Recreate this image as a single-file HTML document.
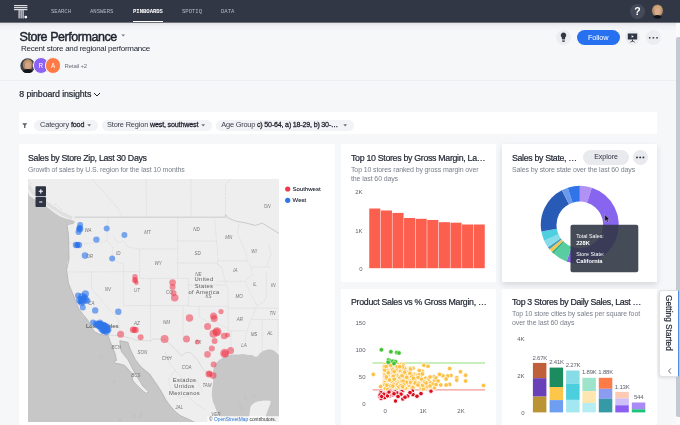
<!DOCTYPE html>
<html>
<head>
<meta charset="utf-8">
<style>
*{box-sizing:border-box;margin:0;padding:0}
html,body{width:680px;height:425px;overflow:hidden;background:#f6f7f9;font-family:"Liberation Sans",sans-serif;color:#1d232f}
body{position:relative}
.abs{position:absolute}
.nav{position:absolute;left:0;top:0;width:680px;height:22px;background:#323746}
.nav:after{content:"";position:absolute;left:0;top:22px;width:680px;height:9px;background:linear-gradient(#6d707b 0,#6d707b 11%,rgba(60,66,80,.10) 12%,rgba(60,66,80,.035) 45%,rgba(60,66,80,0) 100%)}
.nav span{position:absolute;top:8.6px;font-family:"Liberation Mono",monospace;font-size:5.6px;letter-spacing:-.03px;color:#b4b8c2;line-height:6px;white-space:nowrap}
.nav span.act{color:#fff;font-weight:bold}
.t{position:absolute;white-space:nowrap;line-height:1}
.card{position:absolute;background:#fff}
.ct{position:absolute;transform-origin:0 0;transform:translateY(.5px) rotate(.02deg);font-size:8.8px;color:#1d232f;white-space:nowrap;line-height:10px;-webkit-text-stroke:.2px #1d232f}
.cs{position:absolute;transform-origin:0 0;transform:translateY(.5px) rotate(.02deg);font-size:7px;color:#7a7f8a;line-height:10px;white-space:nowrap}
.pill{position:absolute;top:119.5px;height:11.3px;border-radius:6px;background:#f2f3f6}
.pt{position:absolute;top:121px;font-size:7.4px;line-height:8px;color:#3b404c;white-space:nowrap}
.pt b{color:#1d232f;font-weight:normal;font-size:7.15px;-webkit-text-stroke:.27px #1d232f}
.ax{font-family:"Liberation Sans",sans-serif;font-size:6px;fill:#5a5f6a}
</style>
</head>
<body>
<div id="w" style="position:absolute;left:0;top:0;width:680px;height:425px;overflow:hidden;will-change:transform">
<!-- NAV -->
<div class="nav">
  <svg class="abs" style="left:13px;top:4px" width="16" height="16" viewBox="0 0 16 16">
    <g fill="#dcdde1"><rect x="1" y="1" width="13.4" height="1.2"/><rect x="1" y="3" width="13.4" height="1.2"/><rect x="1" y="5" width="13.4" height="1.2"/>
    <rect x="5.5" y="5" width="1.2" height="9.4"/><rect x="7.5" y="5" width="1.2" height="9.4"/><rect x="9.5" y="5" width="1.2" height="9.4"/></g>
    <circle cx="12.8" cy="13.1" r="1.4" fill="#fff"/>
  </svg>
  <span style="left:51px">SEARCH</span>
  <span style="left:90px">ANSWERS</span>
  <span class="act" style="left:133px">PINBOARDS</span>
  <span style="left:182px">SPOTIQ</span>
  <span style="left:221px">DATA</span>
  <div class="abs" style="left:133px;top:21px;width:30px;height:2px;background:#fff"></div>
  <div class="abs" style="left:630px;top:4px;width:15px;height:15px;border-radius:50%;background:#454a58;color:#fff;font-size:10.5px;font-weight:bold;text-align:center;line-height:15.5px">?</div>
  <svg class="abs" style="left:651px;top:4px" width="13" height="15" viewBox="0 0 13 15">
    <defs><clipPath id="av2"><ellipse cx="6.5" cy="7.5" rx="6.3" ry="7.3"/></clipPath></defs>
    <g clip-path="url(#av2)"><rect width="13" height="15" fill="#3a3e4b"/>
    <ellipse cx="6.5" cy="6.6" rx="5.4" ry="6" fill="#b8906a"/>
    <ellipse cx="6.6" cy="7.2" rx="3.1" ry="3.9" fill="#d9aa8c"/>
    <path d="M2 5.6Q3.6 1.6 6.8 1.8Q10 2 11 5.8Q8.8 3.8 6.6 4.2Q4.2 4.2 2 5.6Z" fill="#cfa877"/>
    <ellipse cx="6.5" cy="15" rx="5" ry="4" fill="#121317"/></g>
  </svg>
</div>

<!-- HEADER -->
<div class="t" id="h1" style="left:19.5px;top:30.6px;font-size:12.5px;color:#1d232f;-webkit-text-stroke:.45px #1d232f;letter-spacing:-0.451px">Store Performance</div>
<svg class="abs" style="left:121px;top:34.4px" width="5" height="4"><path d="M0.4 0.4h3.6l-1.8 2.1z" fill="#6b707b"/></svg>
<div class="t" id="h2" style="left:21px;top:44.6px;font-size:8px;color:#1d232f;letter-spacing:-0.264px">Recent store and regional performance</div>

<svg class="abs" style="left:20.4px;top:57.8px" width="15.4" height="15.4" viewBox="0 0 15 15">
  <defs><clipPath id="av1"><circle cx="7.5" cy="7.5" r="7.2"/></clipPath></defs>
  <g clip-path="url(#av1)"><rect width="15" height="15" fill="#3d4149"/>
  <ellipse cx="7.6" cy="6.6" rx="4.9" ry="5.6" fill="#a98560"/>
  <ellipse cx="7.7" cy="7.2" rx="2.9" ry="3.7" fill="#d3a486"/>
  <path d="M3.6 5.4Q5 2 8 2.2Q11 2.4 11.6 5.6Q9.6 3.8 7.6 4.2Q5.4 4.2 3.6 5.4Z" fill="#c09a6e"/>
  <ellipse cx="7.6" cy="15.2" rx="6" ry="4.4" fill="#141519"/></g>
</svg>
<div class="abs" style="left:32.6px;top:57.2px;width:16.6px;height:16.6px;border-radius:50%;background:#8c62f5;border:.8px solid #f6f7f9;color:#fff;font-size:6.3px;text-align:center;line-height:15px">R</div>
<div class="abs" style="left:44.9px;top:57.2px;width:16.6px;height:16.6px;border-radius:50%;background:#ff7a45;border:.8px solid #f6f7f9;color:#fff;font-size:6.3px;text-align:center;line-height:15px">A</div>
<div class="t" id="h3" style="left:64.5px;top:62.6px;font-size:6px;color:#6b707b;letter-spacing:-0.151px">Retail +2</div>

<div class="abs" style="left:.4px;top:.5px;width:0;height:0">
<!-- header actions -->
<div class="abs" style="left:556px;top:29px;width:15px;height:15px;border-radius:50%;background:#ebedf0"></div>
<svg class="abs" style="left:559px;top:31px" width="9" height="11" viewBox="0 0 9 11"><path d="M4.5 0.6a2.7 2.7 0 0 0-1.6 4.9v1.6h3.2V5.5A2.7 2.7 0 0 0 4.5 0.6z" fill="#323746"/><rect x="3" y="7.6" width="3" height="0.9" fill="#323746"/><rect x="3.4" y="9" width="2.2" height="0.9" fill="#323746"/></svg>
<div class="abs" style="left:576.2px;top:29.2px;width:43.2px;height:15.3px;border-radius:8px;background:#2770ef;color:#fff;font-size:7.3px;text-align:center;line-height:15.3px;letter-spacing:-.1px">Follow</div>
<div class="abs" style="left:625px;top:29px;width:15px;height:15px;border-radius:50%;background:#ebedf0"></div>
<svg class="abs" style="left:627px;top:32px" width="11" height="10" viewBox="0 0 11 10"><rect x="0.8" y="0.5" width="9.4" height="6" fill="#323746"/><path d="M4.6 2.2v2.6l2.2-1.3z" fill="#fff"/><rect x="5" y="6.5" width="1" height="2" fill="#323746"/><path d="M3.3 9.2l2.2-1.4 2.2 1.4" stroke="#323746" stroke-width=".8" fill="none"/></svg>
<div class="abs" style="left:646px;top:29.4px;width:14.8px;height:14.8px;border-radius:50%;background:#ebedf0"></div>
<svg class="abs" style="left:648px;top:35px" width="11" height="4"><rect x="0.95" y="1.05" width="1.5" height="1.5" fill="#323746"/><rect x="4.65" y="1.05" width="1.5" height="1.5" fill="#323746"/><rect x="8.25" y="1.05" width="1.5" height="1.5" fill="#323746"/></svg>

</div>
<div class="abs" style="left:0;top:80px;width:676px;height:1px;background:#eceef1"></div>

<div class="t" id="h4" style="left:19.25px;top:89.6px;font-size:8.8px;color:#1d232f;-webkit-text-stroke:.22px #1d232f;letter-spacing:-0.098px">8 pinboard insights</div>
<svg class="abs" style="left:93px;top:92px" width="8" height="5"><path d="M1 1l3 3 3-3" stroke="#1d232f" stroke-width="1" fill="none"/></svg>

<!-- FILTER BAR -->
<div class="card" style="left:19px;top:112.4px;width:638px;height:22px"></div>
<svg class="abs" style="left:21.9px;top:122.6px" width="5.5" height="5.5" viewBox="0 0 6 6"><path d="M0.2 0.3h5.6L3.7 2.8v2.8H2.3V2.8z" fill="#5a5f6a"/></svg>
<div class="pill" style="left:34px;width:63.5px"></div>
<div class="pt" id="p1" style="left:40px;letter-spacing:-0.131px">Category <b>food</b></div>
<svg class="abs" style="left:87.3px;top:124px" width="5" height="3"><path d="M0.3 0.3h3.8L2.2 2.4z" fill="#6b707b"/></svg>
<div class="pill" style="left:101.5px;width:110px"></div>
<div class="pt" id="p2" style="left:107px;letter-spacing:-0.17px">Store Region <b>west, southwest</b></div>
<svg class="abs" style="left:201px;top:124px" width="5" height="3"><path d="M0.3 0.3h3.8L2.2 2.4z" fill="#6b707b"/></svg>
<div class="pill" style="left:215.5px;width:138px"></div>
<div class="pt" id="p3" style="left:221.25px;letter-spacing:-0.205px">Age Group <b>c) 50-64, a) 18-29, b) 30-…</b></div>
<svg class="abs" style="left:343.3px;top:124px" width="5" height="3"><path d="M0.3 0.3h3.8L2.2 2.4z" fill="#6b707b"/></svg>

<!-- CARDS -->
<div class="card" id="c1" style="left:19px;top:144px;width:315.5px;height:290px"></div>
<div class="card" id="c2" style="left:341px;top:144px;width:154.5px;height:138px"></div>
<div class="card" id="c3" style="left:502px;top:144px;width:155px;height:138px;box-shadow:0 3px 6px rgba(40,50,70,.15)"></div>
<div class="card" id="c4" style="left:341px;top:289px;width:154.5px;height:140px"></div>
<div class="card" id="c5" style="left:502px;top:289px;width:155px;height:140px"></div>

<!-- MAP CARD -->
<div class="ct" id="t1" style="left:28px;top:152px;letter-spacing:-0.293px">Sales by Store Zip, Last 30 Days</div>
<div class="cs" id="s1" style="left:28px;top:164px;letter-spacing:-0.141px">Growth of sales by U.S. region for the last 10 months</div>
<svg class="abs" style="left:0;top:0" width="680" height="425" viewBox="0 0 680 425">
  <defs><clipPath id="mc"><rect x="28" y="179" width="251" height="243"/></clipPath></defs>
  <g clip-path="url(#mc)">
    <rect x="28" y="179" width="251" height="243" fill="#eeeeee"/>
    <!-- Pacific -->
    <path fill="#c7c7c7" d="M28 193 L29.5 196 L38 201.5 L47 207 L54 212.5 L60 216.5 L67 219 L72 220 L74.5 221.5 L73 223.5 L69.5 223.5 L67 224.5 L67.8 230 L68.5 235.5 L68.8 247 L69 259 L67.5 262 L66.6 270 L67.5 277 L68.5 283.5 L71 290 L74 296.7 L76 303 L78.8 309 L83 315 L88.3 321 L91 327 L94 331.5 L100 334.5 L107.4 335.5 L108.2 335.4 L109.5 340 L111.5 344.8 L113.3 349 L114.8 353 L115.8 357 L116.5 360.5 L114.2 361.3 L115.5 363.6 L119.5 363.8 L124.7 365.4 L128.5 369.5 L132.1 373.7 L132.3 377.5 L133 381 L136.5 385 L140.4 388.5 L143.5 391.5 L146.1 393.4 L148.6 391.8 L145.8 389 L142.8 386 L140.6 382.5 L138.7 379.4 L135.2 373.5 L132.1 367.9 L130 363.5 L128 359.7 L124.5 355.5 L121.4 351.4 L120.3 346 L119.8 340.7 L124 341.5 L128 342.4 L129 346 L130.5 349.8 L133 355 L135.4 359.7 L138.3 363.5 L141.2 367.1 L145.3 370.5 L149.4 373.7 L152 377.5 L154.4 381.1 L157.8 386 L161 391 L163.5 395.5 L165.9 400 L168.6 403.8 L172 408 L175.6 412 L181 416 L188 419 L196 423 L28 423 Z"/>
    <path fill="none" stroke="#e0e0e0" stroke-width="3" d="M28 186 L33 193 L42 200 L52 207 L62 214 L72 218"/>
    <path fill="none" stroke="#d6d6d6" stroke-width=".8" stroke-dasharray="2 1.5" d="M29 184 L36 193 L46 201 L57 209 L68 215.5 M28 180 L31 184 M40 194 L48 200 M55 204 L62 210"/>
    
    <!-- Gulf -->
    <path fill="#c7c7c7" d="M280 356 L274 350.4 L270 349.2 L267 349.7 L263 351 L260 353.2 L257.5 356.5 L255.3 356.8 L252 355 L248.2 355 L243 354 L238.8 354.4 L230.6 354.4 L226 355.8 L222.4 358 L218.5 360.5 L215.3 363.8 L213.6 368 L213 372 L213.4 378 L213 383.8 L212 390 L211.8 395.6 L213 402 L215.3 407.4 L217 412 L218.8 415.6 L221 419 L224 423 L280 423 Z"/>
    <path fill="#eeeeee" d="M246 423 L248.5 419 L249.4 415.6 L250 410 L250.6 406.2 L254 403 L257.6 401.5 L264 400.6 L270.6 400.8 L270.5 403.5 L269.4 406.2 L267.5 411 L265.9 415.6 L264 423 Z"/>
    <!-- small islands outlines -->
    <g fill="none" stroke="#bdbdbd" stroke-width=".5">
      <ellipse cx="101" cy="357" rx="1.6" ry="2.2"/><circle cx="114.5" cy="381.5" r="1.1"/><circle cx="120" cy="420" r="1.4"/><circle cx="134.5" cy="416" r="1.1"/><circle cx="140.5" cy="416.5" r="1.3"/><circle cx="141.5" cy="413.5" r="1"/>
      <circle cx="245.3" cy="398" r="1.3"/><ellipse cx="254.3" cy="395.5" rx="1.4" ry="1.8"/><circle cx="240.5" cy="405" r="1.2"/><circle cx="242.5" cy="409" r="1.1"/>
    </g>
    <!-- coast outline -->
    <path fill="none" stroke="#b4b4b4" stroke-width=".9" stroke-linejoin="round" d="M74.5 221.5 L73 223.5 L67 224.5 L68.5 235.5 L69 259 L66.6 270 L68.5 283.5 L74 296.7 L78.8 309 L88.3 321 L94 331.5 L100 334.5 L107.4 335.5 L108.2 335.4 L109.5 340 L111.5 344.8 L113.3 349 L114.8 353 L115.8 357 L116.5 360.5 L114.2 361.3 L115.5 363.6 L119.5 363.8 L124.7 365.4 L128.5 369.5 L132.1 373.7 L132.3 377.5 L133 381 L136.5 385 L140.4 388.5 L143.5 391.5 L146.1 393.4 L148.6 391.8 L145.8 389 L142.8 386 L140.6 382.5 L138.7 379.4 L135.2 373.5 L132.1 367.9 L130 363.5 L128 359.7 L124.5 355.5 L121.4 351.4 L120.3 346 L119.8 340.7 L124 341.5 L128 342.4 L129 346 L130.5 349.8 L133 355 L135.4 359.7 L138.3 363.5 L141.2 367.1 L145.3 370.5 L149.4 373.7 L152 377.5 L154.4 381.1 L157.8 386 L161 391 L163.5 395.5 L165.9 400 L168.6 403.8 L172 408 L175.6 412 L181 416 L188 419 L196 423"/>
    <!-- borders -->
    <path fill="none" stroke="#c6c6c6" stroke-width=".9" d="M74.5 217.2 L225.4 217.2 L225.6 214.6 L228 218 L236.5 221.4 L246 223 L255.3 225.4 L262.4 223.2 L280 234"/>
    <path fill="none" stroke="#cfcfcf" stroke-width=".6" d="M107.4 335 L121.5 335.8 L136.8 340.3 L151 341 L153.3 338.8 L165 339.6 L172 346.2 L181.5 355.6 L186 352.5 L190.6 352.8 L197.6 360.3 L203.5 369.7 L209.4 374.9 L213 376"/>
    <path fill="none" stroke="#d2d2d2" stroke-width=".5" stroke-dasharray="2.5 .8" d="M190.8 179 L191.2 217.2 M231 179 L225.5 184 L225.5 214.6 M146 179 L146.5 217.2 M92 179 L100 188 L110 199 L118 209 L121 214 L122 217.2"/>
    <g fill="none" stroke="#d3d3d3" stroke-width=".55" stroke-dasharray="1.6 .9">
      <path d="M69 243 L80 244 L96 243 L107 241 L108 217.2"/>
      <path d="M67 272 L139.6 271.6 L139.6 278.4 L188.4 278.4"/>
      <path d="M108 241 L113 248 L112 256 L117 262 L123.6 264 L123.6 305.5"/>
      <path d="M91.5 272 L91.5 289 L118 319 L120.5 334"/>
      <path d="M123.6 305.5 L188.4 305.5"/>
      <path d="M150.5 278.4 L150.5 341"/>
      <path d="M139.6 271.6 L139.6 249 L177.6 249 L177.6 278.4"/>
      <path d="M113 236 L118 243 L124 241 L128 247 L139.6 249"/>
      <path d="M177.6 249 L177.6 217.2"/>
      <path d="M177.6 241.1 L216.5 241.1 M177.6 263 L216 263 L222 268"/>
      <path d="M214.6 217.2 L216 235 L218 259 L217 263 L222 268 L224.5 279 L228.2 290.3 L228.2 330.8 L231 330.8 L231 350.6"/>
      <path d="M188.4 278.4 L188.4 306.3 L228.2 306.3 M188.4 285 L224.8 285"/>
      <path d="M183 306.3 L183 339.5 M199.4 306.3 L199.4 317 L206 321 L214 322 L222 326 L228.2 329"/>
      <path d="M217.5 260.8 L247 260.8 M217.5 281.3 L245 281.3"/>
      <path d="M238.8 223.8 L237.5 232.5 L241.3 242.5 L246.3 253.8 L247 260.8 L251.3 267.5 L252.5 275 L245 281.3 L250 292.5 L256.3 303.8 L256.5 305.4 L254.6 312 L249.9 322.3 L246.1 333.6 L245.2 342"/>
      <path d="M251.3 267 L270 267 M266.3 272.5 L266.3 298 L262.5 303 L256.5 305.4"/>
      <path d="M268.8 245 L271.3 253.8 L266.3 266.3"/>
      <path d="M228.2 308.2 L280 308.2 M251.8 319.5 L280 319.5 M231 330.8 L246 330.8"/>
      <path d="M262.1 319.5 L262.1 353.4 M278 319.5 L278 345"/>
      <path d="M175 370 L182 378 L196 380 L203 392 M165 352 L170 364 L175 370 L168 380 L172 392 L180 398 L188 396 L196 404 L206 410"/>
    </g>
    <!-- labels -->
    <g font-family="Liberation Sans, sans-serif" font-size="4.5" font-style="italic" fill="#777" text-anchor="middle">
      <text x="88" y="231.5">WA</text><text x="89.5" y="257.5">OR</text><text x="118.2" y="254.5">ID</text><text x="147.5" y="234">MT</text>
      <text x="158.2" y="265">WY</text><text x="196.5" y="231">ND</text><text x="197.6" y="254.5">SD</text><text x="228.7" y="239.3">MN</text>
      <text x="254" y="253">WI</text><text x="235.3" y="271.8">IA</text><text x="198.4" y="275.8">NE</text><text x="267" y="207.7">ON</text>
      <text x="108" y="290.5">NV</text><text x="91.5" y="305">CA</text><text x="137" y="291.5">UT</text><text x="169.3" y="294">CO</text>
      <text x="208.4" y="297.5">KS</text><text x="137" y="325">AZ</text><text x="166.5" y="324">NM</text><text x="198.5" y="343.5">TX</text>
      <text x="254" y="335.5">MS</text><text x="270" y="335">AL</text><text x="244" y="347">LA</text><text x="240" y="321.3">AR</text>
      <text x="272.4" y="314.8">TN</text><text x="239.2" y="297.8">MO</text><text x="255" y="286">IL</text><text x="273.2" y="287.3">IN</text>
      <text x="186.6" y="369.3">COA</text><text x="207" y="387">TAM</text><text x="215.8" y="415.5">VER</text><text x="179.2" y="409">JAL</text>
      <text x="116.3" y="348.9">BCN</text><text x="135.9" y="377.4">BCS</text><text x="142.5" y="354.3">SON</text><text x="166.7" y="359.9">CHH</text>
    </g>
    <g font-family="Liberation Sans, sans-serif" font-size="5.8" fill="#5a5a5a" text-anchor="middle" letter-spacing=".38">
      <text x="204" y="281.2">United</text><text x="204" y="287.8">States</text><text x="204" y="294.2">of America</text>
      <text x="184.5" y="382">Estados</text><text x="184.5" y="388.4">Unidos</text><text x="184.5" y="394.9">Mexicanos</text>
    </g>
    <text x="86" y="328" font-family="Liberation Sans, sans-serif" font-size="6.2" fill="#444" letter-spacing="-.1">Los Angeles</text>
    <!-- BLUE points -->
    <g fill="#2f76ea" fill-opacity=".62">
      <circle cx="80.2" cy="225.1" r="3"/><circle cx="79.8" cy="229" r="3.6"/><circle cx="79.6" cy="228" r="3"/><circle cx="78.5" cy="232" r="3"/>
      <circle cx="106.7" cy="228.5" r="3"/><circle cx="124.4" cy="235" r="3"/><circle cx="96.4" cy="239.6" r="3.2"/>
      <circle cx="76" cy="245" r="3.2"/><circle cx="78.8" cy="245" r="3.3"/><circle cx="77.5" cy="245" r="3"/>
      <circle cx="85" cy="255.6" r="3.3"/><circle cx="112.2" cy="258.5" r="3"/>
      <circle cx="85.4" cy="293.8" r="3.6"/><circle cx="82" cy="297" r="4"/><circle cx="80" cy="300" r="4"/><circle cx="83" cy="300.5" r="4.2"/><circle cx="85.5" cy="299.5" r="3.6"/><circle cx="81.5" cy="302.5" r="3.5"/><circle cx="78" cy="295.5" r="3"/><circle cx="87.5" cy="301" r="3"/>
      <circle cx="82.8" cy="307.6" r="3"/><circle cx="95.2" cy="310.4" r="3.2"/><circle cx="118.3" cy="311.7" r="3.2"/>
      <circle cx="93" cy="322.5" r="3"/><circle cx="96.5" cy="324" r="3.6"/><circle cx="99" cy="325" r="4"/><circle cx="101.5" cy="325.5" r="4.2"/><circle cx="104" cy="326.5" r="4.2"/><circle cx="102" cy="328.5" r="4"/><circle cx="105.5" cy="329.5" r="4"/><circle cx="107" cy="327" r="3.5"/><circle cx="103.5" cy="330.5" r="3.6"/><circle cx="106.5" cy="332" r="3.2"/><circle cx="100" cy="322.5" r="3"/><circle cx="108.5" cy="330" r="3"/>
    </g>
    <g fill="#2f76ea" fill-opacity=".85">
      <circle cx="82" cy="299.5" r="3.6"/><circle cx="84.5" cy="297" r="3"/><circle cx="80.5" cy="301.5" r="2.6"/><circle cx="79.5" cy="228.6" r="2.6"/><circle cx="77.4" cy="245" r="2.6"/>
      <circle cx="100" cy="325.3" r="4.3"/><circle cx="103.6" cy="327.2" r="5"/><circle cx="106.6" cy="329.6" r="3.8"/><circle cx="97" cy="324.3" r="2.8"/><circle cx="104" cy="331" r="3"/>
    </g>
    <!-- RED points -->
    <g fill="#ee3a4e" fill-opacity=".55">
      <circle cx="135" cy="276.8" r="2.7"/><circle cx="135" cy="280.3" r="3"/><circle cx="135.3" cy="280" r="2.4"/><circle cx="136.4" cy="282.8" r="2.3"/>
      <circle cx="172.6" cy="282.6" r="3.3"/><circle cx="172.6" cy="287" r="3"/><circle cx="173.5" cy="293" r="3"/><circle cx="174.7" cy="297.7" r="3.8"/>
      <circle cx="133" cy="329.7" r="3.2"/><circle cx="135.6" cy="330" r="3.2"/><circle cx="134.3" cy="329.8" r="3"/><circle cx="120.6" cy="334.2" r="3.5"/><circle cx="140.6" cy="337.2" r="3"/>
      <circle cx="164.6" cy="339.1" r="4"/><circle cx="186.5" cy="339.1" r="3.5"/><circle cx="189.5" cy="318" r="3.7"/><circle cx="207.6" cy="326.4" r="3.5"/><circle cx="197.3" cy="342" r="2.5"/>
      <circle cx="213.5" cy="316" r="3.5"/><circle cx="214.2" cy="318.4" r="3.5"/><circle cx="221" cy="311.6" r="2.6"/>
      <circle cx="217" cy="331.8" r="4.5"/><circle cx="216.5" cy="332" r="3.6"/><circle cx="213.5" cy="333.7" r="4"/><circle cx="224.2" cy="336" r="3.3"/><circle cx="227.5" cy="335.1" r="2.5"/>
      <circle cx="214.6" cy="341" r="3"/><circle cx="211.8" cy="348.5" r="3"/><circle cx="207.5" cy="354.4" r="3.3"/>
      <circle cx="224.7" cy="353.2" r="4.5"/><circle cx="225" cy="353.6" r="3.3"/><circle cx="230.6" cy="350.4" r="3.5"/>
      <circle cx="213.6" cy="364.5" r="3"/><circle cx="209" cy="374" r="3.5"/><circle cx="209.5" cy="373.7" r="2.8"/><circle cx="213.2" cy="375.6" r="3.3"/>
    </g>
    <!-- attribution -->
    <rect x="207.5" y="416.2" width="72" height="6" fill="#fff" fill-opacity=".8"/>
    <text x="209" y="421" font-family="Liberation Sans, sans-serif" font-size="4.85" fill="#333">© <tspan fill="#2a78d8">OpenStreetMap</tspan> contributors.</text>
    <!-- zoom -->
    <rect x="35.5" y="186.3" width="10.5" height="10" rx=".8" fill="#2f3445"/><rect x="35.5" y="197" width="10.5" height="10" rx=".8" fill="#2f3445"/>
    <path d="M38.7 191.3h4.2M40.8 189.2v4.2M39.2 202h3.2" stroke="#fff" stroke-width="1.1"/>
  </g>
  <!-- legend -->
  <circle cx="287.7" cy="189" r="2.6" fill="#ee3a4e"/><circle cx="287.7" cy="200.3" r="2.6" fill="#2f76ea"/>
  <text x="292.6" y="191.1" font-family="Liberation Sans, sans-serif" font-size="6" fill="#1d232f" stroke="#1d232f" stroke-width=".12">Southwest</text>
  <text x="292.6" y="202.4" font-family="Liberation Sans, sans-serif" font-size="6" fill="#1d232f" stroke="#1d232f" stroke-width=".12">West</text>
</svg>

<!-- BAR CARD -->
<div class="ct" id="t2" style="left:350.5px;top:152px;letter-spacing:-0.308px">Top 10 Stores by Gross Margin, La…</div>
<div class="cs" id="s2a" style="left:350.5px;top:164px;letter-spacing:-0.127px">Top 10 stores ranked by gross margin over</div>
<div class="cs" id="s2b" style="left:350.5px;top:173.2px;letter-spacing:-0.127px">the last 60 days</div>
<svg class="abs" style="left:0;top:0" width="680" height="425" viewBox="0 0 680 425">
<rect x="369.25" y="208.5" width="11.10" height="59.70" fill="#fd5f4f"/>
<rect x="380.85" y="210.5" width="11.10" height="57.70" fill="#fd5f4f"/>
<rect x="392.45" y="212.9" width="11.10" height="55.30" fill="#fd5f4f"/>
<rect x="404.05" y="218" width="11.10" height="50.20" fill="#fd5f4f"/>
<rect x="415.65" y="218.8" width="11.10" height="49.40" fill="#fd5f4f"/>
<rect x="427.25" y="220" width="11.10" height="48.20" fill="#fd5f4f"/>
<rect x="438.85" y="222.2" width="11.10" height="46.00" fill="#fd5f4f"/>
<rect x="450.45" y="222.7" width="11.10" height="45.50" fill="#fd5f4f"/>
<rect x="462.05" y="224.5" width="11.10" height="43.70" fill="#fd5f4f"/>
<rect x="473.65" y="224.5" width="11.10" height="43.70" fill="#fd5f4f"/>
<g class="ax" text-anchor="end"><text x="362.5" y="193.8">2K</text><text x="362.5" y="232.6">1K</text><text x="362.5" y="270.9">0</text></g>
</svg>
<!-- DONUT CARD -->
<div class="ct" id="t3" style="left:511.75px;top:152px;letter-spacing:-0.334px">Sales by State, …</div>
<div class="cs" id="s3" style="left:511.75px;top:164px;letter-spacing:-0.119px">Sales by store state over the last 60 days</div>
<div class="abs" style="left:583px;top:150px;width:46px;height:14.5px;border-radius:8px;background:#e8eaee;color:#2b3040;font-size:7px;text-align:center;line-height:14.5px" id="explore">Explore</div>
<div class="abs" style="left:632.7px;top:150px;width:15px;height:15px;border-radius:50%;background:#e8eaee"></div>
<svg class="abs" style="left:0;top:0" width="680" height="425" viewBox="0 0 680 425">
<g fill="#2b3040"><circle cx="637" cy="157.4" r=".95"/><circle cx="640.2" cy="157.4" r=".95"/><circle cx="643.4" cy="157.4" r=".95"/></g>
<path d="M579.80 185.80A39.0 39.0 0 0 1 591.85 187.71L587.00 202.64A23.3 23.3 0 0 0 579.80 201.50Z" fill="#b291f6"/>
<path d="M591.85 187.71A39.0 39.0 0 1 1 566.46 261.45L571.83 246.69A23.3 23.3 0 1 0 587.00 202.64Z" fill="#8765ef"/>
<path d="M566.46 261.45A39.0 39.0 0 0 1 553.45 253.55L564.06 241.98A23.3 23.3 0 0 0 571.83 246.69Z" fill="#58cda0"/>
<path d="M553.45 253.55A39.0 39.0 0 0 1 551.75 251.89L563.04 240.99A23.3 23.3 0 0 0 564.06 241.98Z" fill="#2fae82"/>
<path d="M551.75 251.89A39.0 39.0 0 0 1 549.49 249.34L561.69 239.46A23.3 23.3 0 0 0 563.04 240.99Z" fill="#f6c851"/>
<path d="M549.49 249.34A39.0 39.0 0 0 1 547.85 247.17L560.71 238.16A23.3 23.3 0 0 0 561.69 239.46Z" fill="#4a9db9"/>
<path d="M547.85 247.17A39.0 39.0 0 0 1 544.17 240.66L558.51 234.28A23.3 23.3 0 0 0 560.71 238.16Z" fill="#86dce8"/>
<path d="M544.17 240.66A39.0 39.0 0 0 1 541.39 231.57L556.85 228.85A23.3 23.3 0 0 0 558.51 234.28Z" fill="#4fd0e0"/>
<path d="M541.39 231.57A39.0 39.0 0 0 1 561.79 190.21L569.04 204.13A23.3 23.3 0 0 0 556.85 228.85Z" fill="#275bb5"/>
<path d="M561.79 190.21A39.0 39.0 0 0 1 567.75 187.71L572.60 202.64A23.3 23.3 0 0 0 569.04 204.13Z" fill="#6c9aeb"/>
<path d="M567.75 187.71A39.0 39.0 0 0 1 579.80 185.80L579.80 201.50A23.3 23.3 0 0 0 572.60 202.64Z" fill="#2f74e9"/>
<path d="M604.8 214.6 L604.8 221.6 L606.4 220.1 L607.5 222.5 L608.6 222 L607.5 219.7 L609.6 219.6 Z" fill="#111" stroke="#fff" stroke-width=".3"/>
<rect x="570.5" y="224.7" width="67.8" height="47.6" rx="2" fill="#323746" fill-opacity=".9"/>
<g font-family="Liberation Sans, sans-serif" font-size="5.35" fill="#fff"><text x="576.2" y="237.7">Total Sales:</text><text x="576.2" y="245.4" font-weight="bold" font-size="5.7">228K</text><text x="576.2" y="255.6">Store State:</text><text x="576.2" y="263" font-weight="bold" font-size="5.7">California</text></g>
</svg>
<!-- SCATTER CARD -->
<div class="ct" id="t4" style="left:350.5px;top:295.8px;letter-spacing:-0.285px">Product Sales vs % Gross Margin, …</div>
<svg class="abs" style="left:0;top:0" width="680" height="425" viewBox="0 0 680 425">
<g class="ax" text-anchor="end"><text x="365.5" y="325.2">150</text><text x="365.5" y="352.2">100</text><text x="365.5" y="379.1">50</text><text x="365.5" y="405.9">0</text></g>
<g class="ax" text-anchor="middle"><text x="385.2" y="412.9">0</text><text x="423.1" y="412.9">1K</text><text x="461" y="412.9">2K</text></g>
<path d="M372.5 363H485" stroke="#8fe07b" stroke-width="1.1"/>
<path d="M372.5 389.9H485" stroke="#f19a9a" stroke-width="1.1"/>
<g fill="#fcc147" stroke="#fff" stroke-width=".7">
<circle cx="397.3" cy="374.6" r="2.3"/>
<circle cx="395.2" cy="364.9" r="2.3"/>
<circle cx="391.8" cy="374.9" r="2.3"/>
<circle cx="387.3" cy="383.5" r="2.3"/>
<circle cx="410.5" cy="381.1" r="2.3"/>
<circle cx="393.9" cy="370.3" r="2.3"/>
<circle cx="404.5" cy="387.7" r="2.3"/>
<circle cx="395.8" cy="368.3" r="2.3"/>
<circle cx="395.6" cy="379.4" r="2.3"/>
<circle cx="425.7" cy="378.2" r="2.3"/>
<circle cx="390.0" cy="388.4" r="2.3"/>
<circle cx="385.8" cy="388.5" r="2.3"/>
<circle cx="409.6" cy="384.7" r="2.3"/>
<circle cx="413.7" cy="385.6" r="2.3"/>
<circle cx="389.6" cy="386.9" r="2.3"/>
<circle cx="388.9" cy="367.2" r="2.3"/>
<circle cx="394.1" cy="389.2" r="2.3"/>
<circle cx="404.5" cy="386.2" r="2.3"/>
<circle cx="413.1" cy="387.6" r="2.3"/>
<circle cx="401.5" cy="367.8" r="2.3"/>
<circle cx="400.4" cy="371.9" r="2.3"/>
<circle cx="407.3" cy="371.2" r="2.3"/>
<circle cx="396.0" cy="387.4" r="2.3"/>
<circle cx="420.3" cy="381.2" r="2.3"/>
<circle cx="386.0" cy="373.2" r="2.3"/>
<circle cx="404.5" cy="381.2" r="2.3"/>
<circle cx="400.3" cy="381.6" r="2.3"/>
<circle cx="384.6" cy="374.5" r="2.3"/>
<circle cx="388.7" cy="384.5" r="2.3"/>
<circle cx="408.0" cy="370.2" r="2.3"/>
<circle cx="389.3" cy="364.5" r="2.3"/>
<circle cx="408.1" cy="386.7" r="2.3"/>
<circle cx="400.8" cy="384.9" r="2.3"/>
<circle cx="396.5" cy="388.2" r="2.3"/>
<circle cx="410.5" cy="387.7" r="2.3"/>
<circle cx="404.1" cy="387.0" r="2.3"/>
<circle cx="413.3" cy="374.2" r="2.3"/>
<circle cx="409.5" cy="377.0" r="2.3"/>
<circle cx="386.8" cy="368.6" r="2.3"/>
<circle cx="388.2" cy="383.1" r="2.3"/>
<circle cx="402.7" cy="370.5" r="2.3"/>
<circle cx="428.3" cy="387.6" r="2.3"/>
<circle cx="390.3" cy="375.7" r="2.3"/>
<circle cx="386.3" cy="385.9" r="2.3"/>
<circle cx="402.5" cy="383.8" r="2.3"/>
<circle cx="401.8" cy="371.0" r="2.3"/>
<circle cx="403.8" cy="383.5" r="2.3"/>
<circle cx="420.7" cy="375.6" r="2.3"/>
<circle cx="391.3" cy="382.3" r="2.3"/>
<circle cx="391.5" cy="386.6" r="2.3"/>
<circle cx="397.6" cy="373.8" r="2.3"/>
<circle cx="386.8" cy="370.6" r="2.3"/>
<circle cx="422.3" cy="371.4" r="2.3"/>
<circle cx="397.2" cy="382.3" r="2.3"/>
<circle cx="400.2" cy="364.6" r="2.3"/>
<circle cx="384.2" cy="381.9" r="2.3"/>
<circle cx="389.2" cy="385.2" r="2.3"/>
<circle cx="398.7" cy="386.4" r="2.3"/>
<circle cx="399.1" cy="388.0" r="2.3"/>
<circle cx="408.6" cy="385.4" r="2.3"/>
<circle cx="393.6" cy="375.4" r="2.3"/>
<circle cx="384.7" cy="371.7" r="2.3"/>
<circle cx="403.8" cy="369.4" r="2.3"/>
<circle cx="390.4" cy="388.7" r="2.3"/>
<circle cx="395.2" cy="381.4" r="2.3"/>
<circle cx="388.9" cy="375.2" r="2.3"/>
<circle cx="411.1" cy="384.2" r="2.3"/>
<circle cx="385.6" cy="383.8" r="2.3"/>
<circle cx="406.7" cy="388.6" r="2.3"/>
<circle cx="414.8" cy="380.9" r="2.3"/>
<circle cx="389.5" cy="371.2" r="2.3"/>
<circle cx="391.5" cy="372.9" r="2.3"/>
<circle cx="393.7" cy="385.0" r="2.3"/>
<circle cx="390.0" cy="387.5" r="2.3"/>
<circle cx="421.2" cy="379.2" r="2.3"/>
<circle cx="401.2" cy="378.4" r="2.3"/>
<circle cx="392.5" cy="389.1" r="2.3"/>
<circle cx="411.0" cy="369.2" r="2.3"/>
<circle cx="411.0" cy="380.5" r="2.3"/>
<circle cx="390.1" cy="381.1" r="2.3"/>
<circle cx="391.3" cy="386.5" r="2.3"/>
<circle cx="384.5" cy="374.4" r="2.3"/>
<circle cx="395.8" cy="370.3" r="2.3"/>
<circle cx="432.6" cy="388.5" r="2.3"/>
<circle cx="387.8" cy="375.8" r="2.3"/>
<circle cx="420.6" cy="387.8" r="2.3"/>
<circle cx="430.4" cy="382.0" r="2.3"/>
<circle cx="412.3" cy="385.4" r="2.3"/>
<circle cx="414.1" cy="374.3" r="2.3"/>
<circle cx="408.8" cy="383.3" r="2.3"/>
<circle cx="384.4" cy="374.0" r="2.3"/>
<circle cx="393.8" cy="389.2" r="2.3"/>
<circle cx="425.4" cy="387.2" r="2.3"/>
<circle cx="387.9" cy="383.0" r="2.3"/>
<circle cx="389.7" cy="389.1" r="2.3"/>
<circle cx="413.1" cy="368.2" r="2.3"/>
<circle cx="400.3" cy="387.2" r="2.3"/>
<circle cx="391.0" cy="382.1" r="2.3"/>
<circle cx="391.4" cy="386.4" r="2.3"/>
<circle cx="389.8" cy="381.5" r="2.3"/>
<circle cx="385.3" cy="375.8" r="2.3"/>
<circle cx="393.2" cy="380.0" r="2.3"/>
<circle cx="391.5" cy="369.5" r="2.3"/>
<circle cx="397.2" cy="385.0" r="2.3"/>
<circle cx="409.1" cy="381.7" r="2.3"/>
<circle cx="385.3" cy="366.4" r="2.3"/>
<circle cx="411.2" cy="383.3" r="2.3"/>
<circle cx="396.1" cy="384.2" r="2.3"/>
<circle cx="410.1" cy="384.4" r="2.3"/>
<circle cx="384.4" cy="373.5" r="2.3"/>
<circle cx="397.4" cy="382.8" r="2.3"/>
<circle cx="420.7" cy="375.7" r="2.3"/>
<circle cx="385.6" cy="369.2" r="2.3"/>
<circle cx="409.1" cy="387.3" r="2.3"/>
<circle cx="389.7" cy="381.0" r="2.3"/>
<circle cx="388.5" cy="383.9" r="2.3"/>
<circle cx="390.1" cy="384.7" r="2.3"/>
<circle cx="389.3" cy="389.3" r="2.3"/>
<circle cx="395.5" cy="373.3" r="2.3"/>
<circle cx="392.8" cy="376.3" r="2.3"/>
<circle cx="394.1" cy="385.9" r="2.3"/>
<circle cx="423.4" cy="388.9" r="2.3"/>
<circle cx="401.0" cy="389.1" r="2.3"/>
<circle cx="387.7" cy="385.2" r="2.3"/>
<circle cx="403.7" cy="366.6" r="2.3"/>
<circle cx="393.7" cy="382.9" r="2.3"/>
<circle cx="410.4" cy="375.3" r="2.3"/>
<circle cx="420.2" cy="372.7" r="2.3"/>
<circle cx="422.4" cy="380.9" r="2.3"/>
<circle cx="393.3" cy="382.9" r="2.3"/>
<circle cx="402.4" cy="376.4" r="2.3"/>
<circle cx="390.7" cy="386.3" r="2.3"/>
<circle cx="401.2" cy="386.7" r="2.3"/>
<circle cx="388.4" cy="384.2" r="2.3"/>
<circle cx="398.4" cy="387.1" r="2.3"/>
<circle cx="390.0" cy="366.9" r="2.3"/>
<circle cx="390.7" cy="375.7" r="2.3"/>
<circle cx="391.8" cy="366.2" r="2.3"/>
<circle cx="384.3" cy="377.0" r="2.3"/>
<circle cx="406.7" cy="388.4" r="2.3"/>
<circle cx="386.6" cy="382.4" r="2.3"/>
<circle cx="434.4" cy="380.7" r="2.3"/>
<circle cx="430.0" cy="382.4" r="2.3"/>
<circle cx="389.1" cy="388.0" r="2.3"/>
<circle cx="400.3" cy="376.2" r="2.3"/>
<circle cx="409.2" cy="368.3" r="2.3"/>
<circle cx="387.9" cy="378.8" r="2.3"/>
<circle cx="397.1" cy="368.1" r="2.3"/>
<circle cx="417.8" cy="375.0" r="2.3"/>
<circle cx="385.7" cy="388.8" r="2.3"/>
<circle cx="388.0" cy="374.9" r="2.3"/>
<circle cx="387.7" cy="382.1" r="2.3"/>
<circle cx="399.2" cy="370.5" r="2.3"/>
<circle cx="405.8" cy="388.4" r="2.3"/>
<circle cx="410.2" cy="370.5" r="2.3"/>
<circle cx="434.5" cy="387.7" r="2.3"/>
<circle cx="391.2" cy="381.3" r="2.3"/>
<circle cx="398.0" cy="388.5" r="2.3"/>
<circle cx="388.8" cy="367.7" r="2.3"/>
<circle cx="399.1" cy="385.5" r="2.3"/>
<circle cx="387.9" cy="382.7" r="2.3"/>
<circle cx="423.0" cy="381.6" r="2.3"/>
<circle cx="397.5" cy="385.1" r="2.3"/>
<circle cx="386.2" cy="376.0" r="2.3"/>
<circle cx="407.3" cy="382.7" r="2.3"/>
<circle cx="391.2" cy="373.0" r="2.3"/>
<circle cx="398.3" cy="387.8" r="2.3"/>
<circle cx="399.9" cy="379.3" r="2.3"/>
<circle cx="419.6" cy="374.4" r="2.3"/>
<circle cx="384.1" cy="383.3" r="2.3"/>
<circle cx="430.1" cy="388.3" r="2.3"/>
<circle cx="389.9" cy="388.3" r="2.3"/>
<circle cx="387.3" cy="376.6" r="2.3"/>
<circle cx="388.8" cy="366.6" r="2.3"/>
<circle cx="395.2" cy="383.6" r="2.3"/>
<circle cx="387.2" cy="375.5" r="2.3"/>
<circle cx="401.0" cy="389.3" r="2.3"/>
<circle cx="411.9" cy="374.7" r="2.3"/>
<circle cx="394.1" cy="365.5" r="2.3"/>
<circle cx="398.0" cy="384.1" r="2.3"/>
<circle cx="391.6" cy="387.0" r="2.3"/>
<circle cx="397.5" cy="367.4" r="2.3"/>
<circle cx="394.2" cy="384.3" r="2.3"/>
<circle cx="398.3" cy="383.7" r="2.3"/>
<circle cx="400.4" cy="386.9" r="2.3"/>
<circle cx="405.2" cy="375.1" r="2.3"/>
<circle cx="400.4" cy="381.9" r="2.3"/>
<circle cx="391.3" cy="380.4" r="2.3"/>
<circle cx="395.6" cy="382.6" r="2.3"/>
<circle cx="386.6" cy="365.4" r="2.3"/>
<circle cx="390.0" cy="379.9" r="2.3"/>
<circle cx="386.5" cy="380.5" r="2.3"/>
<circle cx="406.3" cy="381.3" r="2.3"/>
<circle cx="394.1" cy="376.6" r="2.3"/>
<circle cx="389.2" cy="384.1" r="2.3"/>
<circle cx="393.9" cy="365.3" r="2.3"/>
<circle cx="385.3" cy="366.7" r="2.3"/>
<circle cx="385.1" cy="386.6" r="2.3"/>
<circle cx="393.0" cy="377.5" r="2.3"/>
<circle cx="409.8" cy="380.6" r="2.3"/>
<circle cx="387.6" cy="384.6" r="2.3"/>
<circle cx="410.3" cy="367.7" r="2.3"/>
<circle cx="410.2" cy="368.6" r="2.3"/>
<circle cx="401.6" cy="383.3" r="2.3"/>
<circle cx="391.1" cy="382.7" r="2.3"/>
<circle cx="403.2" cy="364.9" r="2.3"/>
<circle cx="429.0" cy="386.4" r="2.3"/>
<circle cx="386.4" cy="366.8" r="2.3"/>
<circle cx="405.5" cy="388.1" r="2.3"/>
<circle cx="399.1" cy="383.3" r="2.3"/>
<circle cx="397.2" cy="377.2" r="2.3"/>
<circle cx="395.9" cy="385.0" r="2.3"/>
<circle cx="393.5" cy="373.7" r="2.3"/>
<circle cx="392.7" cy="369.7" r="2.3"/>
<circle cx="384.5" cy="377.8" r="2.3"/>
<circle cx="387.3" cy="385.6" r="2.3"/>
<circle cx="389.9" cy="377.0" r="2.3"/>
<circle cx="387.4" cy="389.1" r="2.3"/>
<circle cx="411.7" cy="376.2" r="2.3"/>
<circle cx="404.9" cy="381.6" r="2.3"/>
<circle cx="395.1" cy="372.9" r="2.3"/>
<circle cx="418.8" cy="383.4" r="2.3"/>
<circle cx="411.5" cy="387.6" r="2.3"/>
<circle cx="388.8" cy="387.8" r="2.3"/>
<circle cx="385.5" cy="383.9" r="2.3"/>
<circle cx="393.7" cy="388.8" r="2.3"/>
<circle cx="388.3" cy="378.4" r="2.3"/>
<circle cx="388.5" cy="376.4" r="2.3"/>
<circle cx="396.8" cy="376.6" r="2.3"/>
<circle cx="392.7" cy="385.8" r="2.3"/>
<circle cx="401.3" cy="387.4" r="2.3"/>
<circle cx="384.8" cy="374.4" r="2.3"/>
<circle cx="396.0" cy="383.5" r="2.3"/>
<circle cx="408.7" cy="385.1" r="2.3"/>
<circle cx="391.6" cy="385.9" r="2.3"/>
<circle cx="394.9" cy="376.0" r="2.3"/>
<circle cx="388.7" cy="387.1" r="2.3"/>
<circle cx="384.4" cy="383.7" r="2.3"/>
<circle cx="404.5" cy="368.5" r="2.3"/>
<circle cx="396.2" cy="385.7" r="2.3"/>
<circle cx="399.5" cy="376.3" r="2.3"/>
<circle cx="384.7" cy="364.9" r="2.3"/>
<circle cx="391.5" cy="378.1" r="2.3"/>
<circle cx="395.6" cy="376.8" r="2.3"/>
<circle cx="412.9" cy="387.6" r="2.3"/>
<circle cx="390.4" cy="365.8" r="2.3"/>
<circle cx="399.2" cy="366.4" r="2.3"/>
<circle cx="384.9" cy="386.8" r="2.3"/>
<circle cx="418.1" cy="377.5" r="2.3"/>
<circle cx="411.5" cy="380.8" r="2.3"/>
<circle cx="404.6" cy="372.2" r="2.3"/>
<circle cx="395.4" cy="369.7" r="2.3"/>
<circle cx="395.9" cy="378.6" r="2.3"/>
<circle cx="390.3" cy="387.9" r="2.3"/>
<circle cx="392.2" cy="368.3" r="2.3"/>
<circle cx="389.1" cy="378.8" r="2.3"/>
<circle cx="402.5" cy="366.9" r="2.3"/>
<circle cx="398.7" cy="389.1" r="2.3"/>
<circle cx="394.7" cy="364.6" r="2.3"/>
<circle cx="428.7" cy="379.1" r="2.3"/>
<circle cx="425.7" cy="381.5" r="2.3"/>
<circle cx="422.4" cy="373.9" r="2.3"/>
<circle cx="413.5" cy="378.3" r="2.3"/>
<circle cx="395.5" cy="389.1" r="2.3"/>
<circle cx="385.8" cy="388.7" r="2.3"/>
<circle cx="409.8" cy="373.3" r="2.3"/>
<circle cx="410.0" cy="382.5" r="2.3"/>
<circle cx="388.4" cy="371.8" r="2.3"/>
<circle cx="397.2" cy="375.4" r="2.3"/>
<circle cx="389.7" cy="387.7" r="2.3"/>
<circle cx="395.1" cy="385.9" r="2.3"/>
<circle cx="415.1" cy="383.1" r="2.3"/>
<circle cx="396.3" cy="369.7" r="2.3"/>
<circle cx="387.1" cy="384.4" r="2.3"/>
<circle cx="387.2" cy="387.9" r="2.3"/>
<circle cx="398.1" cy="382.0" r="2.3"/>
<circle cx="421.6" cy="379.3" r="2.3"/>
<circle cx="384.6" cy="377.9" r="2.3"/>
<circle cx="385.3" cy="381.2" r="2.3"/>
<circle cx="427.5" cy="386.4" r="2.3"/>
<circle cx="420.8" cy="385.5" r="2.3"/>
<circle cx="384.1" cy="368.9" r="2.3"/>
<circle cx="390.8" cy="372.0" r="2.3"/>
<circle cx="395.6" cy="371.5" r="2.3"/>
<circle cx="385.4" cy="378.4" r="2.3"/>
<circle cx="388.8" cy="387.0" r="2.3"/>
<circle cx="392.7" cy="370.0" r="2.3"/>
<circle cx="385.2" cy="386.3" r="2.3"/>
<circle cx="406.5" cy="383.5" r="2.3"/>
<circle cx="387.8" cy="379.6" r="2.3"/>
<circle cx="397.6" cy="388.2" r="2.3"/>
<circle cx="397.3" cy="377.3" r="2.3"/>
<circle cx="385.1" cy="376.0" r="2.3"/>
<circle cx="424.8" cy="382.5" r="2.3"/>
<circle cx="406.3" cy="382.1" r="2.3"/>
<circle cx="387.7" cy="371.4" r="2.3"/>
<circle cx="389.5" cy="384.7" r="2.3"/>
<circle cx="386.2" cy="378.4" r="2.3"/>
<circle cx="398.0" cy="383.4" r="2.3"/>
<circle cx="400.4" cy="388.5" r="2.3"/>
<circle cx="391.9" cy="384.6" r="2.3"/>
<circle cx="394.2" cy="387.2" r="2.3"/>
<circle cx="389.9" cy="387.9" r="2.3"/>
<circle cx="394.3" cy="386.3" r="2.3"/>
<circle cx="404.5" cy="377.8" r="2.3"/>
<circle cx="397.4" cy="364.5" r="2.3"/>
<circle cx="396.7" cy="384.8" r="2.3"/>
<circle cx="390.3" cy="380.6" r="2.3"/>
<circle cx="419.3" cy="370.5" r="2.3"/>
<circle cx="394.6" cy="381.5" r="2.3"/>
<circle cx="386.5" cy="370.8" r="2.3"/>
<circle cx="403.9" cy="386.1" r="2.3"/>
<circle cx="387.6" cy="365.8" r="2.3"/>
<circle cx="388.2" cy="372.0" r="2.3"/>
<circle cx="422.6" cy="385.2" r="2.3"/>
<circle cx="401.5" cy="381.0" r="2.3"/>
<circle cx="385.8" cy="385.2" r="2.3"/>
<circle cx="392.1" cy="381.8" r="2.3"/>
<circle cx="392.1" cy="387.6" r="2.3"/>
<circle cx="387.1" cy="387.5" r="2.3"/>
<circle cx="390.6" cy="365.2" r="2.3"/>
<circle cx="398.9" cy="386.8" r="2.3"/>
<circle cx="397.5" cy="376.1" r="2.3"/>
<circle cx="403.1" cy="381.2" r="2.3"/>
<circle cx="397.5" cy="366.5" r="2.3"/>
<circle cx="384.4" cy="366.7" r="2.3"/>
<circle cx="399.7" cy="377.1" r="2.3"/>
<circle cx="386.8" cy="386.3" r="2.3"/>
<circle cx="417.9" cy="385.1" r="2.3"/>
<circle cx="410.5" cy="369.0" r="2.3"/>
<circle cx="394.0" cy="376.7" r="2.3"/>
<circle cx="385.0" cy="384.8" r="2.3"/>
<circle cx="403.7" cy="384.9" r="2.3"/>
<circle cx="396.7" cy="369.0" r="2.3"/>
<circle cx="385.3" cy="388.7" r="2.3"/>
<circle cx="386.4" cy="377.0" r="2.3"/>
<circle cx="390.2" cy="388.1" r="2.3"/>
<circle cx="392.7" cy="382.6" r="2.3"/>
<circle cx="390.4" cy="385.8" r="2.3"/>
<circle cx="393.5" cy="384.7" r="2.3"/>
<circle cx="434.1" cy="376.7" r="2.3"/>
<circle cx="402.0" cy="375.7" r="2.3"/>
<circle cx="401.1" cy="385.5" r="2.3"/>
<circle cx="396.6" cy="375.2" r="2.3"/>
<circle cx="386.8" cy="385.3" r="2.3"/>
<circle cx="394.6" cy="375.1" r="2.3"/>
<circle cx="387.1" cy="370.5" r="2.3"/>
<circle cx="397.3" cy="366.8" r="2.3"/>
<circle cx="393.3" cy="376.2" r="2.3"/>
<circle cx="394.1" cy="371.6" r="2.3"/>
<circle cx="387.6" cy="389.4" r="2.3"/>
<circle cx="392.8" cy="386.1" r="2.3"/>
<circle cx="406.7" cy="377.3" r="2.3"/>
<circle cx="424.4" cy="382.0" r="2.3"/>
<circle cx="399.7" cy="366.7" r="2.3"/>
<circle cx="389.5" cy="380.0" r="2.3"/>
<circle cx="388.3" cy="372.8" r="2.3"/>
<circle cx="402.8" cy="389.2" r="2.3"/>
<circle cx="402.6" cy="386.8" r="2.3"/>
<circle cx="394.2" cy="379.2" r="2.3"/>
<circle cx="373.3" cy="374.4" r="2.3"/>
<circle cx="380.6" cy="386.6" r="2.3"/>
<circle cx="449.6" cy="368.5" r="2.3"/>
<circle cx="460.5" cy="371.7" r="2.3"/>
<circle cx="465.6" cy="375.2" r="2.3"/>
<circle cx="465.6" cy="381.0" r="2.3"/>
<circle cx="456.7" cy="377.7" r="2.3"/>
<circle cx="456.7" cy="380.1" r="2.3"/>
<circle cx="483.5" cy="385.5" r="2.3"/>
<circle cx="451.0" cy="375.5" r="2.3"/>
<circle cx="447.7" cy="376.0" r="2.3"/>
<circle cx="446.1" cy="379.0" r="2.3"/>
<circle cx="449.6" cy="384.4" r="2.3"/>
<circle cx="446.1" cy="385.0" r="2.3"/>
<circle cx="440.7" cy="385.0" r="2.3"/>
<circle cx="442.9" cy="375.8" r="2.3"/>
<circle cx="439.6" cy="374.4" r="2.3"/>
<circle cx="423.9" cy="365.2" r="2.3"/>
<circle cx="428.0" cy="366.3" r="2.3"/>
<circle cx="436.0" cy="378.0" r="2.3"/>
<circle cx="438.0" cy="381.0" r="2.3"/>
<circle cx="433.0" cy="384.0" r="2.3"/>
<circle cx="430.0" cy="377.0" r="2.3"/>
<circle cx="384.7" cy="370.0" r="2.3"/>
<circle cx="386.0" cy="366.5" r="2.3"/>
<circle cx="436.0" cy="384.5" r="2.3"/>
<circle cx="430.0" cy="386.0" r="2.3"/>
<circle cx="426.0" cy="383.0" r="2.3"/>
</g>
<g fill="#d90f20" stroke="#fff" stroke-width=".85">
<circle cx="383.7" cy="395.3" r="2.2"/>
<circle cx="392.8" cy="392.6" r="2.2"/>
<circle cx="382.4" cy="393.7" r="2.2"/>
<circle cx="384.0" cy="393.2" r="2.2"/>
<circle cx="381.5" cy="392.1" r="2.2"/>
<circle cx="381.8" cy="394.3" r="2.2"/>
<circle cx="380.9" cy="391.2" r="2.2"/>
<circle cx="389.6" cy="396.1" r="2.2"/>
<circle cx="392.8" cy="394.8" r="2.2"/>
<circle cx="381.2" cy="397.0" r="2.2"/>
<circle cx="389.1" cy="395.2" r="2.2"/>
<circle cx="389.9" cy="391.2" r="2.2"/>
<circle cx="385.8" cy="393.1" r="2.2"/>
<circle cx="394.9" cy="391.4" r="2.2"/>
<circle cx="382.6" cy="396.3" r="2.2"/>
<circle cx="382.4" cy="393.5" r="2.2"/>
<circle cx="384.3" cy="393.3" r="2.2"/>
<circle cx="381.0" cy="397.4" r="2.2"/>
<circle cx="399.7" cy="394.1" r="2.2"/>
<circle cx="383.9" cy="394.3" r="2.2"/>
<circle cx="395.5" cy="393.8" r="2.2"/>
<circle cx="402.7" cy="391.6" r="2.2"/>
<circle cx="398.6" cy="394.4" r="2.2"/>
<circle cx="380.2" cy="395.4" r="2.2"/>
<circle cx="399.6" cy="392.4" r="2.2"/>
<circle cx="382.0" cy="393.1" r="2.2"/>
<circle cx="384.7" cy="396.9" r="2.2"/>
<circle cx="388.0" cy="393.0" r="2.2"/>
<circle cx="381.9" cy="396.3" r="2.2"/>
<circle cx="399.4" cy="393.2" r="2.2"/>
<circle cx="397.2" cy="393.0" r="2.2"/>
<circle cx="401.9" cy="391.5" r="2.2"/>
<circle cx="385.1" cy="396.7" r="2.2"/>
<circle cx="400.8" cy="393.7" r="2.2"/>
<circle cx="387.8" cy="395.5" r="2.2"/>
<circle cx="384.6" cy="395.7" r="2.2"/>
<circle cx="380.3" cy="397.2" r="2.2"/>
<circle cx="387.4" cy="393.8" r="2.2"/>
<circle cx="381.1" cy="398.5" r="2.2"/>
<circle cx="393.6" cy="392.7" r="2.2"/>
<circle cx="379.6" cy="396.2" r="2.2"/>
<circle cx="381.0" cy="392.6" r="2.2"/>
<circle cx="384.7" cy="397.6" r="2.2"/>
<circle cx="383.8" cy="394.1" r="2.2"/>
<circle cx="387.5" cy="395.9" r="2.2"/>
<circle cx="389.0" cy="392.1" r="2.2"/>
<circle cx="395.5" cy="401.0" r="2.2"/>
<circle cx="402.8" cy="399.0" r="2.2"/>
<circle cx="412.5" cy="391.0" r="2.2"/>
<circle cx="431.0" cy="391.2" r="2.2"/>
<circle cx="380.0" cy="395.0" r="2.2"/>
<circle cx="381.6" cy="396.5" r="2.2"/>
<circle cx="407.7" cy="396" r="2.3"/>
<circle cx="413" cy="394.6" r="2.3"/>
<circle cx="417" cy="396.2" r="2.3"/>
<circle cx="405" cy="397.2" r="2.3"/>
<circle cx="401" cy="394.2" r="2.3"/>
<circle cx="410" cy="392.6" r="2.3"/>
<circle cx="398" cy="396.5" r="2.3"/>
<circle cx="394" cy="393.8" r="2.3"/>
<circle cx="421" cy="393.6" r="2.3"/>
</g>
<g fill="#3fc22f" stroke="#fff" stroke-width=".5">
<circle cx="381.4" cy="349.8" r="2.2"/>
<circle cx="390.9" cy="351.7" r="2.2"/>
<circle cx="396.8" cy="352.5" r="2.2"/>
<circle cx="399.0" cy="353.0" r="2.2"/>
<circle cx="388.5" cy="360.0" r="2.2"/>
<circle cx="390.5" cy="361.0" r="2.2"/>
<circle cx="392.8" cy="361.2" r="2.2"/>
<circle cx="395.5" cy="361.8" r="2.2"/>
<circle cx="388.2" cy="362.3" r="2.2"/>
<circle cx="394.0" cy="363.5" r="2.2"/>
</g>
</svg>
<!-- STACK CARD -->
<div class="ct" id="t5" style="left:512.2px;top:296px;letter-spacing:-0.321px">Top 3 Stores by Daily Sales, Last …</div>
<div class="cs" id="s5a" style="left:512.2px;top:307.9px;letter-spacing:-0.115px">Top 10 store cities by sales per square foot</div>
<div class="cs" id="s5b" style="left:512.2px;top:317.4px;letter-spacing:-0.109px">over the last 60 days</div>
<svg class="abs" style="left:0;top:0" width="680" height="425" viewBox="0 0 680 425">
<g class="ax" text-anchor="end"><text x="524.6" y="340.9">4K</text><text x="524.6" y="378.4">2K</text><text x="524.6" y="415.2">0</text></g>
<rect x="532.9" y="362.9" width="13.5" height="15.30" fill="#c0603a"/>
<rect x="532.9" y="378.2" width="13.5" height="18.40" fill="#6a40b9"/>
<rect x="532.9" y="396.6" width="13.5" height="15.80" fill="#b99334"/>
<text class="ax" text-anchor="middle" x="539.8" y="359.6" fill="#333" letter-spacing="-.2">2.67K</text>
<rect x="549.6" y="367.6" width="13.5" height="19.40" fill="#1b8b60"/>
<rect x="549.6" y="387.0" width="13.5" height="13.10" fill="#fcc64b"/>
<rect x="549.6" y="400.1" width="13.5" height="12.30" fill="#6e9ef1"/>
<text class="ax" text-anchor="middle" x="556.5" y="364.3" fill="#333" letter-spacing="-.2">2.41K</text>
<rect x="566.1" y="370.5" width="13.5" height="13.10" fill="#87dce8"/>
<rect x="566.1" y="383.6" width="13.5" height="16.30" fill="#4bcede"/>
<rect x="566.1" y="399.9" width="13.5" height="12.50" fill="#a3e7f1"/>
<text class="ax" text-anchor="middle" x="573.0" y="367.3" fill="#333" letter-spacing="-.2">2.27K</text>
<rect x="582.4" y="377.8" width="13.5" height="13.40" fill="#9ee4ca"/>
<rect x="582.4" y="391.2" width="13.5" height="11.80" fill="#fde6b0"/>
<rect x="582.4" y="403.0" width="13.5" height="9.40" fill="#b6edf3"/>
<text class="ax" text-anchor="middle" x="589.3" y="374.3" fill="#333" letter-spacing="-.2">1.89K</text>
<rect x="598.8" y="377.8" width="13.5" height="11.00" fill="#fd7b46"/>
<rect x="598.8" y="388.8" width="13.5" height="10.10" fill="#8b9bf1"/>
<rect x="598.8" y="398.9" width="13.5" height="13.50" fill="#359aa6"/>
<text class="ax" text-anchor="middle" x="605.7" y="374.3" fill="#333" letter-spacing="-.2">1.88K</text>
<rect x="615.3" y="391.9" width="13.5" height="6.60" fill="#fecab4"/>
<rect x="615.3" y="398.5" width="13.5" height="6.80" fill="#cebefa"/>
<rect x="615.3" y="405.3" width="13.5" height="7.10" fill="#8b5df1"/>
<text class="ax" text-anchor="middle" x="622.2" y="388.5" fill="#333" letter-spacing="-.2">1.13K</text>
<rect x="631.8" y="402.5" width="13.5" height="6.80" fill="#aa8bf6"/>
<rect x="631.8" y="409.3" width="13.5" height="3.10" fill="#20c17b"/>
<text class="ax" text-anchor="middle" x="638.7" y="399.1" fill="#333" letter-spacing="-.2">544</text>
</svg>
<!-- SIDE -->
<div class="abs" style="left:676px;top:23px;width:4px;height:402px;background:#fafafb"></div>
<div class="abs" style="left:676.3px;top:37px;width:4px;height:380px;background:#c5c9d1;border-radius:2px 0 0 2px"></div>
<div class="abs" style="left:659px;top:290px;width:20.4px;height:87px;background:#fff;border:1px solid #dfe2e7;border-right:1.6px solid #4a90e2;border-radius:3px 0 0 3px;box-shadow:-1px 1px 3px rgba(0,0,0,.10)"></div>
<div class="abs" id="gs" style="left:673.2px;top:295px;font-size:8.3px;color:#1d232f;white-space:nowrap;transform-origin:0 0;transform:rotate(90deg);line-height:8px;-webkit-text-stroke:.2px #1d232f">Getting Started</div>
<svg class="abs" style="left:667px;top:366.6px" width="5" height="8"><path d="M3.8 1.4L1.6 4l2.2 2.6" stroke="#5a5f6a" stroke-width=".9" fill="none"/></svg>
</div>
</body>
</html>
